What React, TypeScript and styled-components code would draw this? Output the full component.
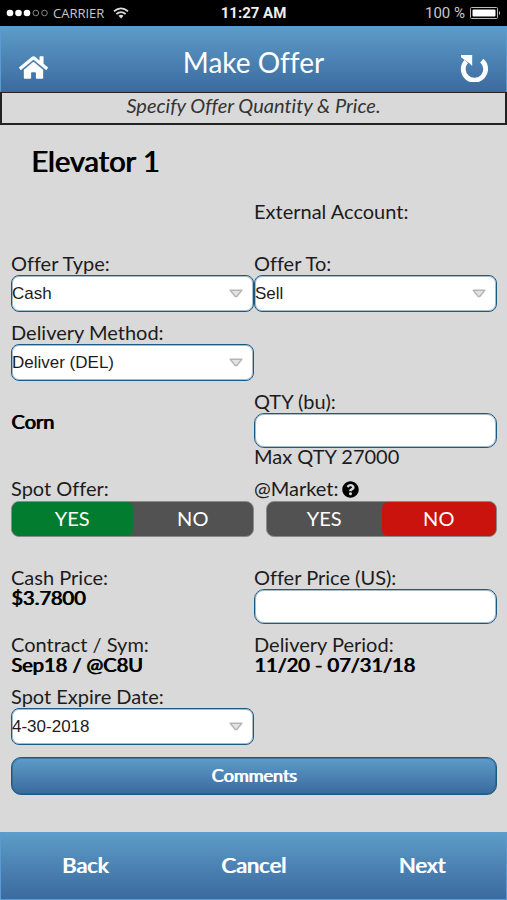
import React, { useState } from "react";
import styled, { createGlobalStyle } from "styled-components";
import { FaHome, FaQuestionCircle } from "react-icons/fa";

const GlobalStyle = createGlobalStyle`
  * { box-sizing: border-box; }
  body { margin: 0; background: #d9d9d9; }
  button, input, select { margin: 0; font: inherit; color: inherit; }
`;

const barGradient = "linear-gradient(#5d9cc9, #3b6a9e)";

const Screen = styled.div`
  display: flex;
  flex-direction: column;
  min-height: 100vh;
  background: #d9d9d9;
  color: #1c1c1c;
  font-family: Lato, sans-serif;
  font-size: 20px;
  font-variant-ligatures: none;
  line-height: 20px;
`;

const StatusBar = styled.div`
  display: grid;
  grid-template-columns: 1fr auto 1fr;
  align-items: center;
  height: 26px;
  padding: 0 6px;
  background: #000;
  color: #c8c8c8;
  font-family: "Open Sans", sans-serif;
  font-size: 14px;
`;

const StatusGroup = styled.div<{ $end?: boolean }>`
  display: flex;
  align-items: center;
  justify-content: ${(p) => (p.$end ? "flex-end" : "flex-start")};
  gap: ${(p) => (p.$end ? 5 : 4)}px;
`;

const Carrier = styled.span`
  font-size: 13px;
  margin-right: 5px;
`;

const Percent = styled.span`
  font-family: Roboto, sans-serif;
  font-size: 15px;
`;

const Clock = styled.span`
  font-family: Roboto, sans-serif;
  font-size: 15px;
  font-weight: 700;
  color: #eee;
`;

const Header = styled.header`
  display: grid;
  grid-template-columns: 32px 1fr 32px;
  align-items: center;
  height: 66px;
  padding: 4px 16px 0;
  background: ${barGradient};
  border: solid #5b9bd0;
  border-width: 1px 1px 0;
`;

const Title = styled.h1`
  margin: 0;
  color: #fff;
  font-size: 28px;
  font-weight: 400;
  line-height: 36px;
  text-align: center;
`;

const IconButton = styled.button`
  display: flex;
  justify-content: center;
  padding: 12px 0 0;
  border: 0;
  background: none;
  color: #fff;
`;

const Notice = styled.p`
  margin: 0;
  padding: 2px 0 8px;
  border: solid #222;
  border-width: 1px 2px 2px;
  color: #333;
  font-style: italic;
  text-align: center;
`;

const Form = styled.form`
  flex: 1;
  padding: 0 10px 0 11px;
`;

const Heading = styled.h2`
  margin: 20px 20px 26px;
  color: #000;
  font-size: 29px;
  font-weight: 400;
  line-height: 32px;
  text-shadow: 1px 0 0 currentColor;
`;

const Row = styled.div<{ $space?: number }>`
  display: grid;
  grid-template-columns: 1fr 1fr;
  margin-bottom: ${(p) => p.$space ?? 12}px;
`;

const Field = styled.div<{ $right?: boolean }>`
  display: flex;
  flex-direction: column;
  grid-column: ${(p) => (p.$right ? 2 : "auto")};
  min-width: 0;
`;

const Label = styled.label`
  display: block;
  padding-bottom: 4px;
  line-height: 16px;
  white-space: nowrap;
`;

const Value = styled.strong`
  display: block;
  padding-bottom: 4px;
  color: #000;
  font-weight: 400;
  line-height: 16px;
  text-shadow: 1px 0 0 currentColor;
`;

const Commodity = styled(Value)`
  padding-top: 20px;
`;

const SelectFrame = styled.div`
  position: relative;
  svg {
    position: absolute;
    top: 14px;
    right: 11px;
    pointer-events: none;
  }
`;

const Select = styled.select`
  display: block;
  appearance: none;
  width: 100%;
  height: 37px;
  padding: 0;
  border: 1px solid #1d5a82;
  border-radius: 8px;
  background: #fff;
  box-shadow: inset 0 0 0 1px rgba(29, 90, 130, 0.4);
  font-family: "Liberation Sans", sans-serif;
  font-size: 17px;
`;

const TextBox = styled.input`
  width: 100%;
  height: 35px;
  padding: 0 8px;
  border: 1px solid #1d5a82;
  border-radius: 10px;
  background: #fff;
  box-shadow: inset 0 0 0 1px rgba(29, 90, 130, 0.4);
`;

const HelpButton = styled.button`
  display: flex;
  padding: 1px 0 0;
  border: 0;
  background: none;
  color: #000;
`;

const LabelLine = styled.div`
  display: flex;
  gap: 4px;
  height: 20px;
`;

const Toggle = styled.div<{ $inset?: boolean }>`
  display: flex;
  height: 36px;
  margin: 1px 0 0 ${(p) => (p.$inset ? 12 : 0)}px;
  border: 1px solid #8a8a8a;
  border-radius: 8px;
  background: #525252;
  overflow: hidden;
`;

const Option = styled.label<{ $fill: string }>`
  display: flex;
  flex: 1;
  align-items: center;
  justify-content: center;
  padding-bottom: 2px;
  color: #fff;
  cursor: pointer;
  &:has(input:checked) {
    border-radius: 6px;
    background: ${(p) => p.$fill};
  }
  input {
    appearance: none;
    width: 0;
    height: 0;
    margin: 0;
  }
`;

const CommentsButton = styled.button`
  display: block;
  width: 100%;
  height: 38px;
  padding: 0 0 2px;
  border: 1px solid #1d5a82;
  border-radius: 10px;
  background: ${barGradient};
  box-shadow: inset 0 0 0 1px rgba(29, 90, 130, 0.5);
  color: #fff;
  font-size: 18px;
  text-shadow: 1px 0 0 currentColor;
`;

const Footer = styled.nav`
  display: grid;
  grid-template-columns: repeat(3, 1fr);
  height: 68px;
  background: ${barGradient};
  border: 1px solid #5b9bd0;
`;

const FooterButton = styled.button`
  padding: 0 0 2px;
  border: 0;
  background: none;
  color: #fff;
  font-size: 22px;
  text-shadow: 1px 0 0 currentColor;
`;

function DropDown({ id, label, options }: { id: string; label: string; options: string[] }) {
  return (
    <Field>
      <Label htmlFor={id}>{label}</Label>
      <SelectFrame>
        <Select id={id}>
          {options.map((o) => (
            <option key={o}>{o}</option>
          ))}
        </Select>
        <svg width="14" height="9" viewBox="0 0 14 9" aria-hidden="true">
          <path d="M1.2 1.3h11.6L7.8 7.5H6.2z" fill="#e2e2e2" stroke="#b5b5b5" strokeWidth="1.4" strokeLinejoin="round" />
        </svg>
      </SelectFrame>
    </Field>
  );
}

function YesNo({ name, label, initial, inset }: { name: string; label: string; initial: string; inset?: boolean }) {
  const [value, setValue] = useState(initial);
  return (
    <Toggle $inset={inset} role="radiogroup" aria-label={label}>
      {["YES", "NO"].map((o) => (
        <Option key={o} $fill={o === "YES" ? "#027c2e" : "#c9130c"}>
          <input type="radio" name={name} checked={value === o} onChange={() => setValue(o)} />
          {o}
        </Option>
      ))}
    </Toggle>
  );
}

export default function App() {
  return (
    <Screen>
      <GlobalStyle />
      <StatusBar>
        <StatusGroup>
          <svg width="43" height="8" viewBox="0 0 43 8" aria-hidden="true">
            <g fill="#fff">
              <circle cx="4" cy="4" r="3.3" />
              <circle cx="12.5" cy="4" r="3.3" />
              <circle cx="21" cy="4" r="3.3" />
            </g>
            <g fill="none" stroke="#888">
              <circle cx="29.8" cy="4" r="2.8" />
              <circle cx="38.5" cy="4" r="2.8" />
            </g>
          </svg>
          <Carrier>CARRIER</Carrier>
          <svg width="16" height="12" viewBox="0 0 16 12" fill="none" stroke="#ddd" strokeWidth="1.8" aria-hidden="true">
            <path d="M1 4.3Q8-1.5 15 4.3M3.4 7Q8 3.2 12.6 7" />
            <path d="M5.5 8.8Q8 6.8 10.5 8.8L8 11.5z" fill="#ddd" stroke="none" />
          </svg>
        </StatusGroup>
        <Clock>11:27 AM</Clock>
        <StatusGroup $end>
          <Percent>100 %</Percent>
          <svg width="31" height="12" viewBox="0 0 31 12" aria-hidden="true">
            <rect x="0.5" y="0.5" width="27" height="11" rx="1" fill="none" stroke="#bbb" />
            <rect x="2.5" y="2.5" width="23" height="7" rx="1" fill="#fff" />
            <path d="M29 4q2 2 0 4z" fill="#ddd" />
          </svg>
        </StatusGroup>
      </StatusBar>

      <Header>
        <IconButton type="button" aria-label="Home">
          <FaHome size={29} />
        </IconButton>
        <Title>Make Offer</Title>
        <IconButton type="button" aria-label="Refresh">
          <svg width="28" height="28" viewBox="0 0 28 28" aria-hidden="true">
            <path d="M6.2 7.5A11.2 11.2 0 1 0 21.8 6.6" fill="none" stroke="#fff" strokeWidth="4.8" />
            <path d="M1 1H12.2V12L8.8 8.8L5.5 6.5L1 3.2z" fill="#fff" />
          </svg>
        </IconButton>
      </Header>
      <Notice>Specify Offer Quantity &amp; Price.</Notice>

      <Form onSubmit={(e) => e.preventDefault()}>
        <Heading>Elevator 1</Heading>
        <Row $space={32}>
          <Field $right>
            <Label as="span">External Account:</Label>
          </Field>
        </Row>
        <Row>
          <DropDown id="type" label="Offer Type:" options={["Cash", "Basis"]} />
          <DropDown id="side" label="Offer To:" options={["Sell", "Buy"]} />
        </Row>
        <Row>
          <DropDown id="method" label="Delivery Method:" options={["Deliver (DEL)", "Pick Up"]} />
        </Row>
        <Row>
          <Commodity>Corn</Commodity>
          <Field>
            <Label htmlFor="qty">QTY (bu):</Label>
            <TextBox id="qty" inputMode="numeric" />
            <Label as="span">Max QTY 27000</Label>
          </Field>
        </Row>
        <Row $space={32}>
          <Field>
            <Label as="span">Spot Offer:</Label>
            <YesNo name="spot" label="Spot Offer" initial="YES" />
          </Field>
          <Field>
            <LabelLine>
              <Label as="span">@Market:</Label>
              <HelpButton type="button" aria-label="Help">
                <FaQuestionCircle size={17} />
              </HelpButton>
            </LabelLine>
            <YesNo name="market" label="At Market" initial="NO" inset />
          </Field>
        </Row>
        <Row>
          <Field>
            <Label as="span">Cash Price:</Label>
            <Value>$3.7800</Value>
          </Field>
          <Field>
            <Label htmlFor="price">Offer Price (US):</Label>
            <TextBox id="price" inputMode="decimal" />
          </Field>
        </Row>
        <Row>
          <Field>
            <Label as="span">Contract / Sym:</Label>
            <Value>Sep18 / @C8U</Value>
          </Field>
          <Field>
            <Label as="span">Delivery Period:</Label>
            <Value>11/20 - 07/31/18</Value>
          </Field>
        </Row>
        <Row>
          <DropDown id="expire" label="Spot Expire Date:" options={["4-30-2018", "5-31-2018"]} />
        </Row>
        <CommentsButton type="button">Comments</CommentsButton>
      </Form>

      <Footer>
        <FooterButton type="button">Back</FooterButton>
        <FooterButton type="button">Cancel</FooterButton>
        <FooterButton type="button">Next</FooterButton>
      </Footer>
    </Screen>
  );
}
